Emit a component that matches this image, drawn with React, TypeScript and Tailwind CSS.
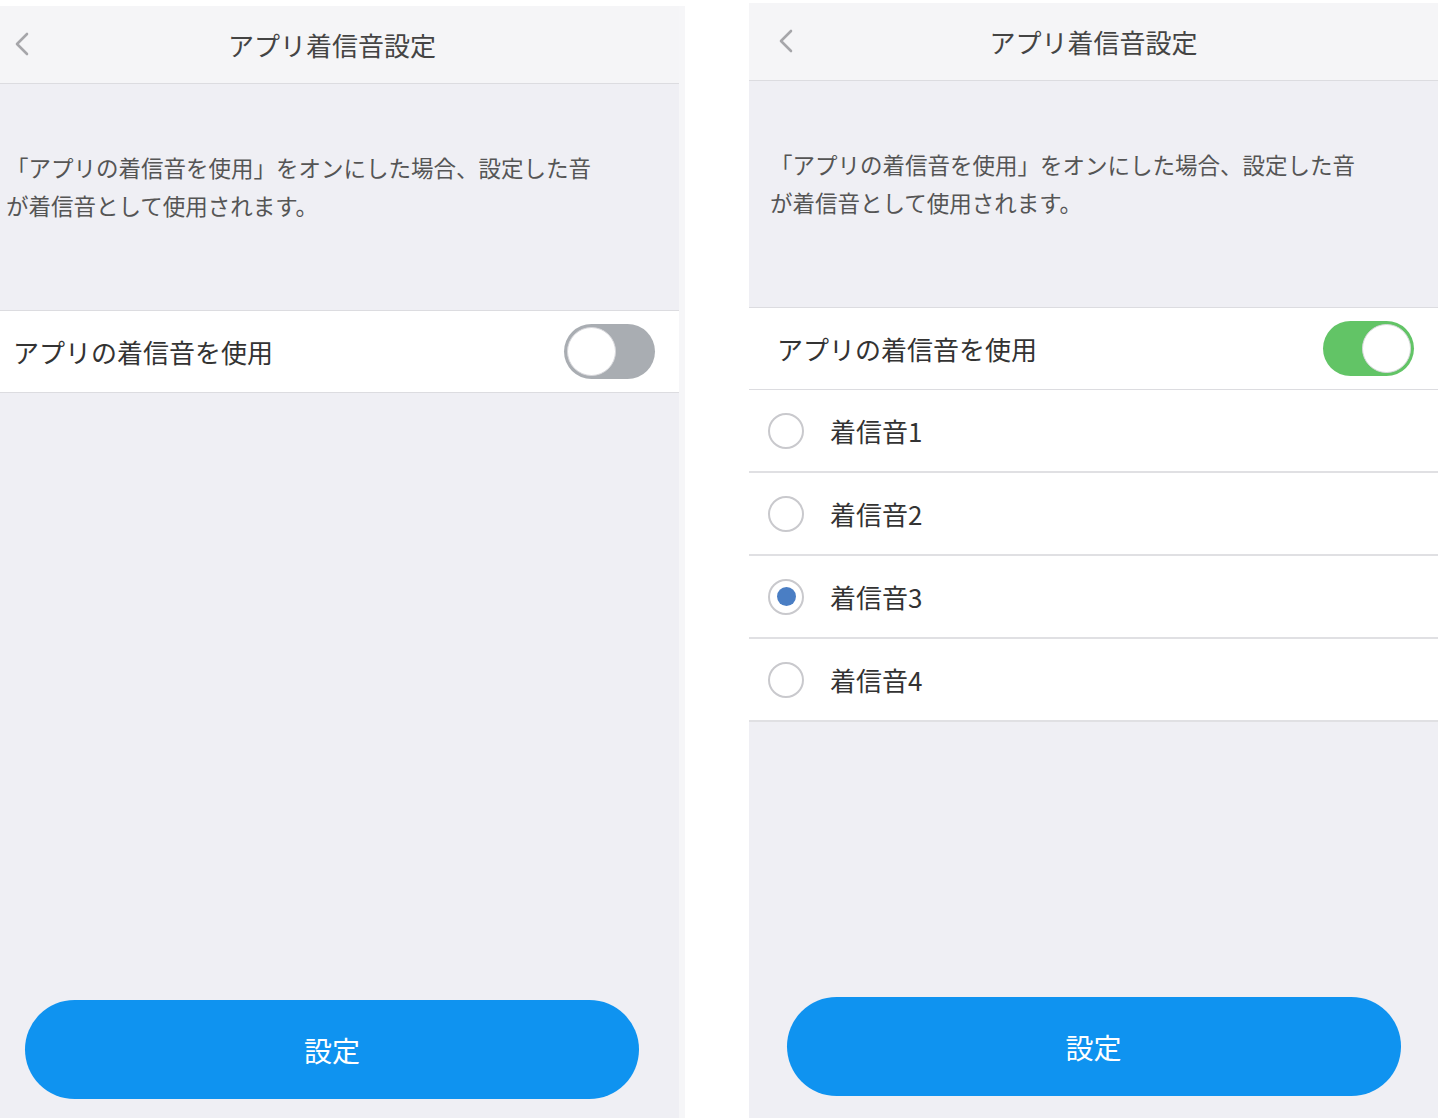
import React from "react";

const FONT = { fontFamily: '"Noto Sans CJK JP", "Noto Sans", sans-serif' };

function Chevron() {
  return (
    <svg width="16" height="24" viewBox="0 0 16 24" fill="none">
      <path d="M13 2 L3 12 L13 22" stroke="#a6a6aa" strokeWidth="2.6" strokeLinecap="round" strokeLinejoin="round" />
    </svg>
  );
}

function Toggle({ on }: { on: boolean }) {
  return (
    <div
      className={
        "flex h-[55px] w-[91px] items-center rounded-full p-[3px] " +
        (on ? "justify-end bg-[#62c466]" : "justify-start bg-[#a9adb2]")
      }
    >
      <div className="h-[49px] w-[49px] rounded-full border border-[#d8d8dc] bg-white" />
    </div>
  );
}

function Radio({ checked }: { checked: boolean }) {
  return (
    <div className="flex h-[36px] w-[36px] items-center justify-center rounded-full border-2 border-[#c9c9cd] bg-white">
      {checked && <div className="h-[19px] w-[19px] rounded-full bg-[#4a7ec4]" />}
    </div>
  );
}

function Panel({ on, className }: { on: boolean; className: string }) {
  return (
    <div className={"flex flex-col bg-[#efeff4] " + className} style={FONT}>
      <div className="relative flex h-[78px] items-center justify-center border-b border-[#dcdce0] bg-[#f5f5f7]">
        <div className="absolute left-[29px] top-[26px]">
          <Chevron />
        </div>
        <span className="text-[26px] text-[#444]">アプリ着信音設定</span>
      </div>
      <div className="h-[226px] px-[21px] pt-[64px] text-[22.5px] leading-[38px] text-[#555]">
        「アプリの着信音を使用」をオンにした場合、設定した音
        <br />
        が着信音として使用されます。
      </div>
      <div className="flex h-[83px] items-center justify-between border-y border-[#dcdce0] bg-white pl-[28px] pr-[24px]">
        <span className="text-[26px] text-[#333]">アプリの着信音を使用</span>
        <Toggle on={on} />
      </div>
      {on &&
        [1, 2, 3, 4].map((n) => (
          <div key={n} className="flex h-[83px] items-center border-b-2 border-[#e0e0e3] bg-white pl-[19px]">
            <Radio checked={n === 3} />
            <span className="ml-[26px] text-[26px] text-[#333]">着信音{n}</span>
          </div>
        ))}
      <div className="flex-1" />
      <div className="flex justify-center">
        <button className="h-[99px] w-[614px] rounded-full bg-[#0f93f0] text-[28px] text-white">設定</button>
      </div>
    </div>
  );
}

export default function App() {
  return (
    <div className="flex h-[1118px] w-[1448px] overflow-hidden bg-white">
      <div className="flex">
        <Panel on={false} className="ml-[-15px] mt-[6px] h-[1112px] w-[694px] pb-[19px]" />
        <div className="mt-[6px] w-[6px] bg-[#f6f6f8]" />
      </div>
      <Panel on={true} className="ml-[64px] mt-[3px] h-[1115px] w-[689px] pb-[22px]" />
    </div>
  );
}
